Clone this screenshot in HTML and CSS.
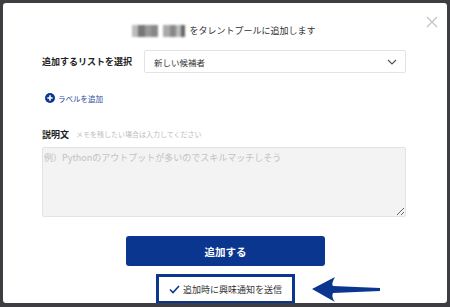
FILE: index.html
```html
<!DOCTYPE html>
<html lang="ja">
<head>
<meta charset="utf-8">
<link rel="stylesheet" href="styles.css">
</head>
<body>
<div class="modal">
  <svg class="close" viewBox="0 0 12 12" width="12" height="12"><path d="M1,1 L11,11 M11,1 L1,11" stroke="#c4c4c4" stroke-width="1.3" fill="none"/></svg>
  <div class="title"><span class="blur b1"></span><span class="blur b2"></span>をタレントプールに追加します</div>
  <div class="row">
    <div class="label">追加するリストを選択</div>
    <div class="select">
      <span>新しい候補者</span>
      <svg class="chev" viewBox="0 0 10 6" width="10" height="6"><path d="M1,1 L5,5 L9,1" stroke="#555" stroke-width="1.2" fill="none"/></svg>
    </div>
  </div>
  <div class="addlabel">
    <svg viewBox="0 0 10 10" width="10" height="10"><circle cx="5" cy="5" r="5" fill="#0b3690"/><path d="M5,2.3 V7.7 M2.3,5 H7.7" stroke="#fff" stroke-width="1.6"/></svg>
    <span>ラベルを追加</span>
  </div>
  <div class="desc"><span class="dlabel">説明文</span><span class="hint">メモを残したい場合は入力してください</span></div>
  <textarea class="memo" placeholder="例）Pythonのアウトプットが多いのでスキルマッチしそう"></textarea>
  <div class="actions">
    <button class="submit">追加する</button>
    <div class="notify">
      <svg viewBox="0 0 11 9" width="11" height="9"><path d="M1,4.5 L4,7.5 L10,1" stroke="#0b3690" stroke-width="1.6" fill="none"/></svg>
      <span>追加時に興味通知を送信</span>
    </div>
  </div>
  <svg class="arrow" viewBox="0 0 80 32" width="80" height="32"><path d="M4,14 L27,2 Q23,9 25,11 L72,13 L72,16 L25,18 Q23,22 27,27 Z" fill="#0b3690"/></svg>
</div>
</body>
</html>
```
FILE: styles.css
```css
html, body {
  margin: 0;
  background: #3d3d42;
  font-family: "Noto Sans CJK JP", "Noto Sans", sans-serif;
}
.modal {
  position: relative;
  margin: 3px 3px 0;
  height: 300px;
  background: #fff;
  border-radius: 3px;
  box-sizing: border-box;
  padding: 20px 41px 0 39px;
  overflow: hidden;
}
.close {
  position: absolute;
  left: 423px;
  top: 13px;
}
.title {
  height: 16px;
  line-height: 16px;
  font-size: 9px;
  color: #333;
  display: flex;
  justify-content: center;
  align-items: center;
}
.blur {
  display: inline-block;
  height: 12px;
  filter: blur(0.8px);
}
.b1 {
  width: 26px;
  margin-right: 5px;
  background: linear-gradient(90deg, #bbb 0 25%, #777 25% 50%, #999 50% 75%, #888 75%);
}
.b2 {
  width: 22px;
  margin-right: 4px;
  background: linear-gradient(90deg, #aaa 0 30%, #888 30% 60%, #bbb 60% 80%, #666 80%);
}
.row {
  margin-top: 11px;
  display: flex;
  align-items: center;
}
.label {
  width: 102px;
  font-size: 9px;
  font-weight: bold;
  color: #222;
}
.select {
  width: 262px;
  height: 23px;
  box-sizing: border-box;
  border: 1px solid #e3e3e3;
  border-radius: 2px;
  display: flex;
  align-items: center;
  justify-content: space-between;
  padding: 0 8px 0 9px;
  font-size: 8.5px;
  color: #333;
}
.chev { margin-top: 1px; }
.addlabel {
  margin-top: 18px;
  margin-left: 3px;
  height: 14px;
  display: flex;
  align-items: center;
  gap: 3px;
  font-size: 7.5px;
  color: #25479a;
}
.desc {
  margin-top: 22px;
  height: 14px;
  display: flex;
  align-items: center;
}
.dlabel {
  font-size: 9px;
  font-weight: bold;
  color: #222;
}
.hint {
  margin-left: 7px;
  font-size: 7px;
  color: #bdbdbd;
}
.memo {
  display: block;
  margin: 6px 0 0;
  width: 364px;
  height: 70px;
  box-sizing: border-box;
  background: #f3f3f3;
  border: 1px solid #e3e3e3;
  border-radius: 2px;
  padding: 4px 1px;
  font-family: inherit;
  font-size: 9px;
  line-height: 12px;
  resize: vertical;
}
.memo::placeholder { color: #c2c2c2; }
.actions {
  display: flex;
  flex-direction: column;
  align-items: center;
  margin-left: 3px;
}
.submit {
  margin-top: 19px;
  width: 199px;
  height: 30px;
  border: none;
  border-radius: 3px;
  background: #0b3690;
  color: #fff;
  font-family: inherit;
  font-size: 10.5px;
  font-weight: bold;
}
.notify {
  margin-top: 8px;
  width: 139px;
  height: 30px;
  box-sizing: border-box;
  border: 3px solid #0b3690;
  display: flex;
  align-items: center;
  justify-content: center;
  gap: 3px;
  font-size: 9px;
  color: #333;
}
.arrow {
  position: absolute;
  left: 305px;
  top: 272px;
}
```
